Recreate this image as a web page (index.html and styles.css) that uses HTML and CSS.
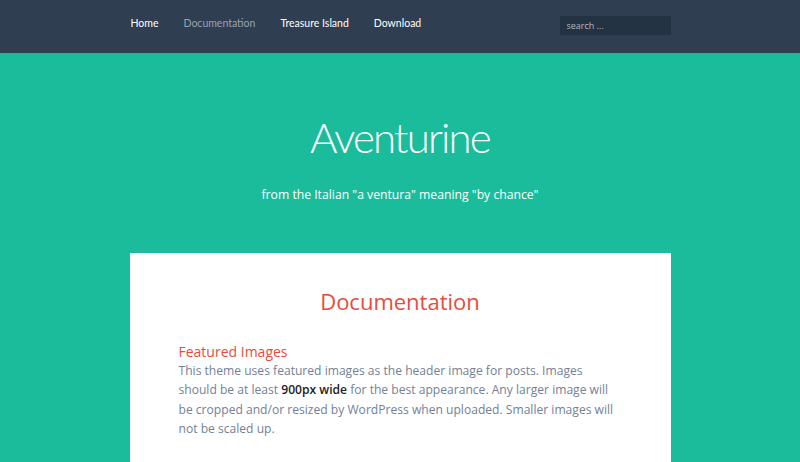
FILE: index.html
```html
<!DOCTYPE html>
<html lang="en">
<head>
  <meta charset="UTF-8" />
  <title>Aventurine</title>
  <meta name="viewport" content="width=device-width, initial-scale=1.0" />
  <link rel="stylesheet" href="styles.css">
</head>
<body>
  <header class="site-nav">
    <div class="nav-inner">
      <ul class="menu">
        <li><a href="#">Home</a></li>
        <li><a href="#" class="current">Documentation</a></li>
        <li><a href="#">Treasure Island</a></li>
        <li><a href="#">Download</a></li>
      </ul>
      <input type="search" class="search-field" placeholder="search ..." />
    </div>
  </header>

  <section class="site-branding">
    <h1 class="site-title">Aventurine</h1>
    <p class="site-description">from the Italian "a ventura" meaning "by chance"</p>
  </section>

  <main class="content">
    <article class="entry">
      <h2 class="entry-title">Documentation</h2>
      <h3>Featured Images</h3>
      <p>This theme uses featured images as the header image for posts. Images should be at least <strong>900px wide</strong> for the best appearance. Any larger image will be cropped and/or resized by WordPress when uploaded. Smaller images will not be scaled up.</p>
    </article>
  </main>
</body>
</html>
```

FILE: styles.css
```css
body {
  margin: 0;
  font-family: 'Open Sans', 'Noto Sans', sans-serif;
  background-color: #1abc9c;
  color: #738195;
}

.site-nav {
  background-color: #2f3e51;
  height: 53px;
}

.nav-inner {
  width: 541px;
  margin: 0 auto;
  display: flex;
  justify-content: space-between;
  align-items: center;
  height: 100%;
}

.menu {
  list-style: none;
  margin: 0;
  padding: 0 0 12px 1px;
  display: flex;
  gap: 25px;
}

.menu a {
  font-family: 'Lato', sans-serif;
  color: #ffffff;
  text-decoration: none;
  font-size: 10.5px;
  font-weight: 400;
}

.menu a.current {
  color: #95a3b3;
}

.search-field {
  width: 111px;
  height: 19px;
  box-sizing: border-box;
  margin-bottom: 3px;
  border: none;
  background-color: #243343;
  color: #fff;
  padding: 0 7px;
  font-family: inherit;
  font-size: 9px;
}

.search-field::placeholder {
  color: #aeb8c3;
}

.site-branding {
  text-align: center;
  color: #ffffff;
  padding: 58px 0 50px;
}

.site-title {
  margin: 0;
  font-family: 'Lato', sans-serif;
  font-weight: 300;
  font-size: 42px;
  letter-spacing: -1.8px;
  line-height: 52px;
}

.site-description {
  margin: 23px 0 0;
  font-size: 12.2px;
}

.content {
  width: 541px;
  margin: 0 auto;
}

.entry {
  background-color: #ffffff;
  padding: 33px 49px 40px;
}

.entry-title {
  margin: 0 0 26px;
  text-align: center;
  color: #e74c3c;
  font-weight: 400;
  font-size: 22px;
}

.entry h3 {
  margin: 0;
  color: #e74c3c;
  font-weight: 400;
  font-size: 14px;
}

.entry p {
  margin: 0;
  font-size: 12.1px;
  line-height: 19.3px;
}

.entry strong {
  color: #222;
  font-weight: 600;
}
```
